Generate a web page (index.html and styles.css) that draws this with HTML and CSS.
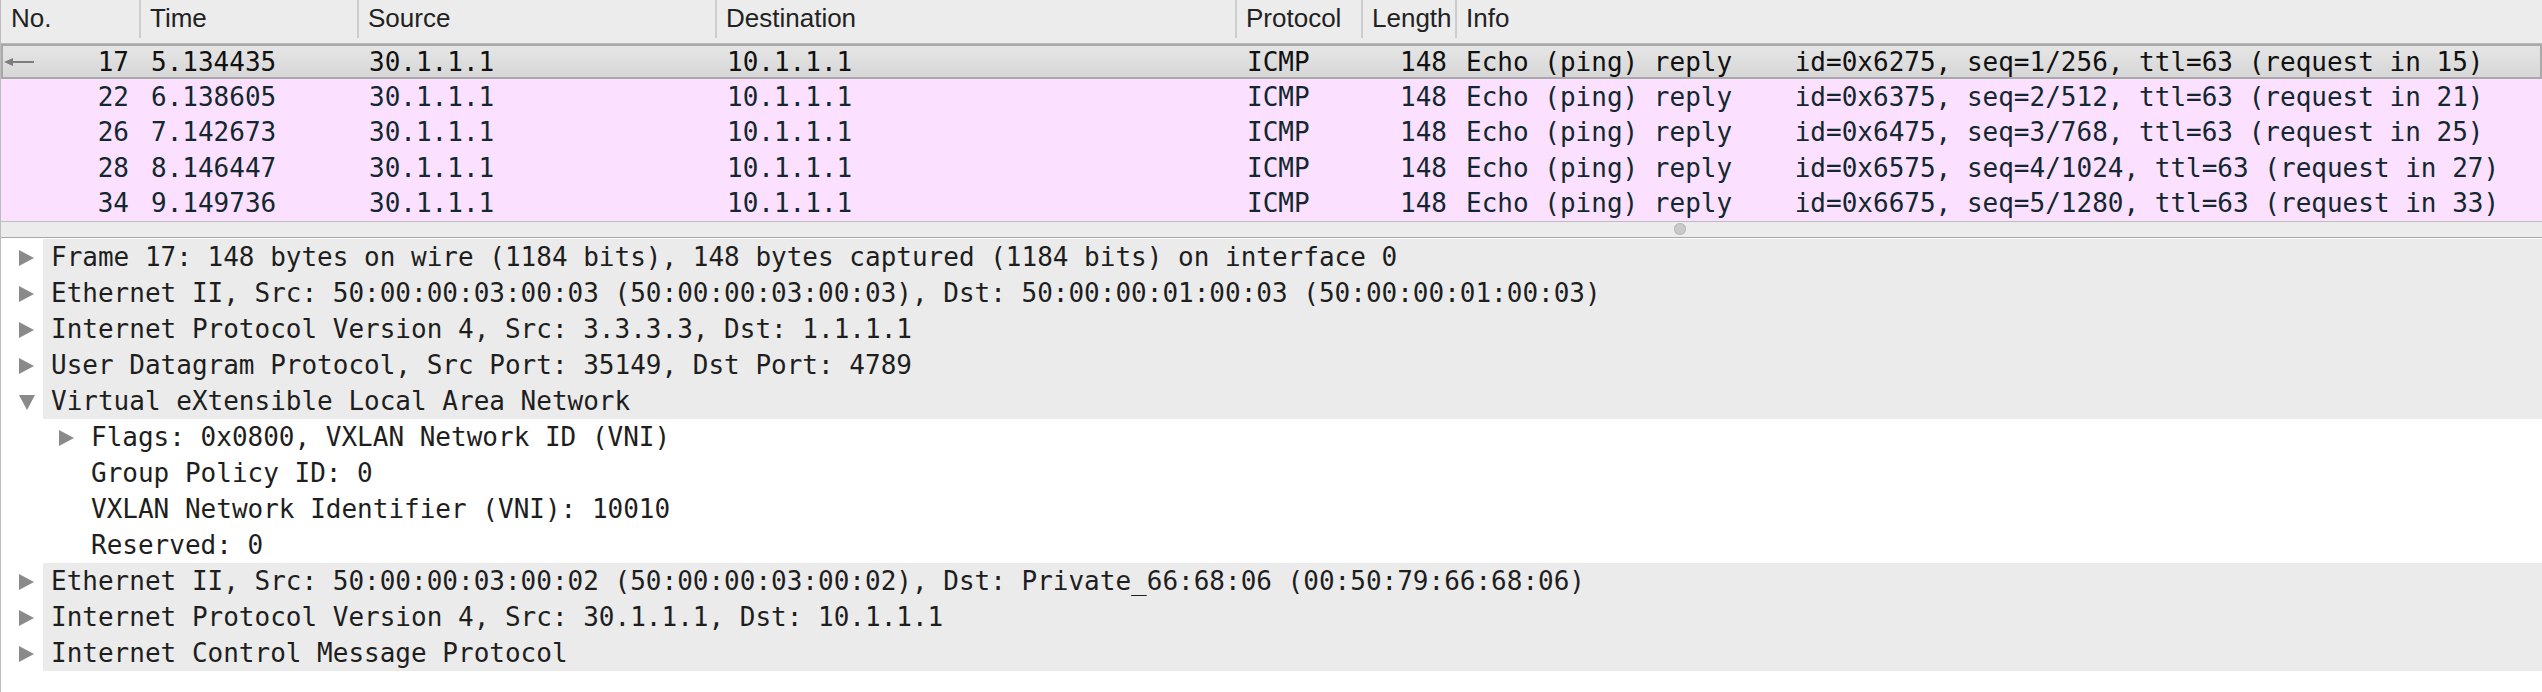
FILE: index.html
```html
<!DOCTYPE html>
<html>
<head>
<meta charset="utf-8">
<link rel="stylesheet" href="styles.css">
</head>
<body>
<div class="app">
  <div class="plist">
    <div class="phead">
      <div class="hc c-no">No.</div>
      <div class="hc c-time">Time</div>
      <div class="hc c-src">Source</div>
      <div class="hc c-dst">Destination</div>
      <div class="hc c-proto">Protocol</div>
      <div class="hc c-len">Length</div>
      <div class="hc c-info">Info</div>
    </div>
    <div class="prow sel">
      <div class="c c-no"><svg class="rel" width="30" height="12" viewBox="0 0 30 12"><path d="M0 6 L9 2 L9 10 Z" fill="#7d7d7d"/><path d="M8 6 H30" stroke="#7d7d7d" stroke-width="2"/></svg><span class="num">17</span></div>
      <div class="c c-time">5.134435</div>
      <div class="c c-src">30.1.1.1</div>
      <div class="c c-dst">10.1.1.1</div>
      <div class="c c-proto">ICMP</div>
      <div class="c c-len">148</div>
      <div class="c c-info">Echo (ping) reply    id=0x6275, seq=1/256, ttl=63 (request in 15)</div>
    </div>
    <div class="prow icmp">
      <div class="c c-no"><span class="num">22</span></div>
      <div class="c c-time">6.138605</div>
      <div class="c c-src">30.1.1.1</div>
      <div class="c c-dst">10.1.1.1</div>
      <div class="c c-proto">ICMP</div>
      <div class="c c-len">148</div>
      <div class="c c-info">Echo (ping) reply    id=0x6375, seq=2/512, ttl=63 (request in 21)</div>
    </div>
    <div class="prow icmp">
      <div class="c c-no"><span class="num">26</span></div>
      <div class="c c-time">7.142673</div>
      <div class="c c-src">30.1.1.1</div>
      <div class="c c-dst">10.1.1.1</div>
      <div class="c c-proto">ICMP</div>
      <div class="c c-len">148</div>
      <div class="c c-info">Echo (ping) reply    id=0x6475, seq=3/768, ttl=63 (request in 25)</div>
    </div>
    <div class="prow icmp">
      <div class="c c-no"><span class="num">28</span></div>
      <div class="c c-time">8.146447</div>
      <div class="c c-src">30.1.1.1</div>
      <div class="c c-dst">10.1.1.1</div>
      <div class="c c-proto">ICMP</div>
      <div class="c c-len">148</div>
      <div class="c c-info">Echo (ping) reply    id=0x6575, seq=4/1024, ttl=63 (request in 27)</div>
    </div>
    <div class="prow icmp">
      <div class="c c-no"><span class="num">34</span></div>
      <div class="c c-time">9.149736</div>
      <div class="c c-src">30.1.1.1</div>
      <div class="c c-dst">10.1.1.1</div>
      <div class="c c-proto">ICMP</div>
      <div class="c c-len">148</div>
      <div class="c c-info">Echo (ping) reply    id=0x6675, seq=5/1280, ttl=63 (request in 33)</div>
    </div>
  </div>
  <div class="splitter"><span class="grip"></span></div>
  <div class="tree">
    <div class="node top"><span class="tw"><span class="tri-r"></span></span><span class="lbl">Frame 17: 148 bytes on wire (1184 bits), 148 bytes captured (1184 bits) on interface 0</span></div>
    <div class="node top"><span class="tw"><span class="tri-r"></span></span><span class="lbl">Ethernet II, Src: 50:00:00:03:00:03 (50:00:00:03:00:03), Dst: 50:00:00:01:00:03 (50:00:00:01:00:03)</span></div>
    <div class="node top"><span class="tw"><span class="tri-r"></span></span><span class="lbl">Internet Protocol Version 4, Src: 3.3.3.3, Dst: 1.1.1.1</span></div>
    <div class="node top"><span class="tw"><span class="tri-r"></span></span><span class="lbl">User Datagram Protocol, Src Port: 35149, Dst Port: 4789</span></div>
    <div class="node top"><span class="tw"><span class="tri-d"></span></span><span class="lbl">Virtual eXtensible Local Area Network</span></div>
    <div class="node sub"><span class="tw"><span class="tri-r"></span></span><span class="lbl">Flags: 0x0800, VXLAN Network ID (VNI)</span></div>
    <div class="node sub"><span class="tw"></span><span class="lbl">Group Policy ID: 0</span></div>
    <div class="node sub"><span class="tw"></span><span class="lbl">VXLAN Network Identifier (VNI): 10010</span></div>
    <div class="node sub"><span class="tw"></span><span class="lbl">Reserved: 0</span></div>
    <div class="node top"><span class="tw"><span class="tri-r"></span></span><span class="lbl">Ethernet II, Src: 50:00:00:03:00:02 (50:00:00:03:00:02), Dst: Private_66:68:06 (00:50:79:66:68:06)</span></div>
    <div class="node top"><span class="tw"><span class="tri-r"></span></span><span class="lbl">Internet Protocol Version 4, Src: 30.1.1.1, Dst: 10.1.1.1</span></div>
    <div class="node top"><span class="tw"><span class="tri-r"></span></span><span class="lbl">Internet Control Message Protocol</span></div>
  </div>
</div>
</body>
</html>
```
FILE: styles.css
```css
html, body {
  margin: 0;
  padding: 0;
  background: #ffffff;
}
.app {
  width: 2542px;
  height: 692px;
  border-left: 1px solid #bdbdbd;
  box-sizing: border-box;
  overflow: hidden;
}
.plist {
  display: flex;
  flex-direction: column;
}
.phead {
  display: flex;
  align-items: flex-start;
  height: 44px;
  box-sizing: border-box;
  background: #ececec;
  border-bottom: 1px solid #b8b8b8;
  font-family: "Liberation Sans", Arial, sans-serif;
  font-size: 26px;
  color: #222222;
}
.hc {
  height: 38px;
  display: flex;
  align-items: center;
  box-sizing: border-box;
  border-right: 2px solid #cdcdcd;
  padding-left: 9px;
  padding-bottom: 2px;
}
.phead .c-no { padding-left: 10px; }
.phead .c-info { border-right: none; flex: 1; }
.c-no { width: 140px; }
.c-time { width: 218px; }
.c-src { width: 358px; }
.c-dst { width: 520px; }
.c-proto { width: 126px; }
.c-len { width: 94px; }
.c-info { flex: 1; }
.prow {
  display: flex;
  align-items: center;
  height: 35.4px;
  box-sizing: border-box;
  font-family: "DejaVu Sans Mono", "Liberation Mono", monospace;
  font-size: 26px;
  white-space: pre;
}
.prow .c {
  padding-left: 10px;
  box-sizing: border-box;
  overflow: hidden;
}
.prow .c-no {
  display: flex;
  align-items: center;
  padding-left: 3px;
  padding-right: 12px;
}
.prow .num { margin-left: auto; }
.prow .c-len { text-align: right; padding-right: 10px; }
.prow .c-info { padding-left: 9px; }
.icmp {
  background: #fce0ff;
  color: #12272e;
}
.sel {
  background: linear-gradient(#e6e6e6, #d6d6d6);
  color: #111111;
  box-shadow: inset 0 0 0 2px #a9a9a9;
}
.rel { display: block; }
.splitter {
  position: relative;
  height: 15px;
  background: #ececec;
  border-top: 1px solid #bdbdbd;
  border-bottom: 1px solid #a9a9a9;
}
.grip {
  position: absolute;
  left: 1673px;
  top: 1px;
  width: 12px;
  height: 12px;
  border-radius: 50%;
  background: #cacaca;
  box-shadow: inset 0 0 0 1px #b9b9b9;
}
.tree {
  padding-top: 1px;
  font-family: "DejaVu Sans Mono", "Liberation Mono", monospace;
  font-size: 26px;
  color: #1e1e1e;
}
.node {
  display: flex;
  height: 36px;
  white-space: pre;
}
.node.sub { padding-left: 40px; }
.tw {
  width: 42px;
  flex: none;
  display: flex;
  align-items: center;
  padding-left: 18px;
  box-sizing: border-box;
}
.lbl {
  flex: 1;
  display: flex;
  align-items: center;
  padding-left: 8px;
}
.node.top .lbl { background: #ebebeb; }
.tri-r {
  width: 0;
  height: 0;
  border-top: 8px solid transparent;
  border-bottom: 8px solid transparent;
  border-left: 15px solid #8a8a8a;
  margin-top: 3px;
}
.tri-d {
  width: 0;
  height: 0;
  border-left: 8px solid transparent;
  border-right: 8px solid transparent;
  border-top: 15px solid #8a8a8a;
  margin-top: 3px;
}
```
